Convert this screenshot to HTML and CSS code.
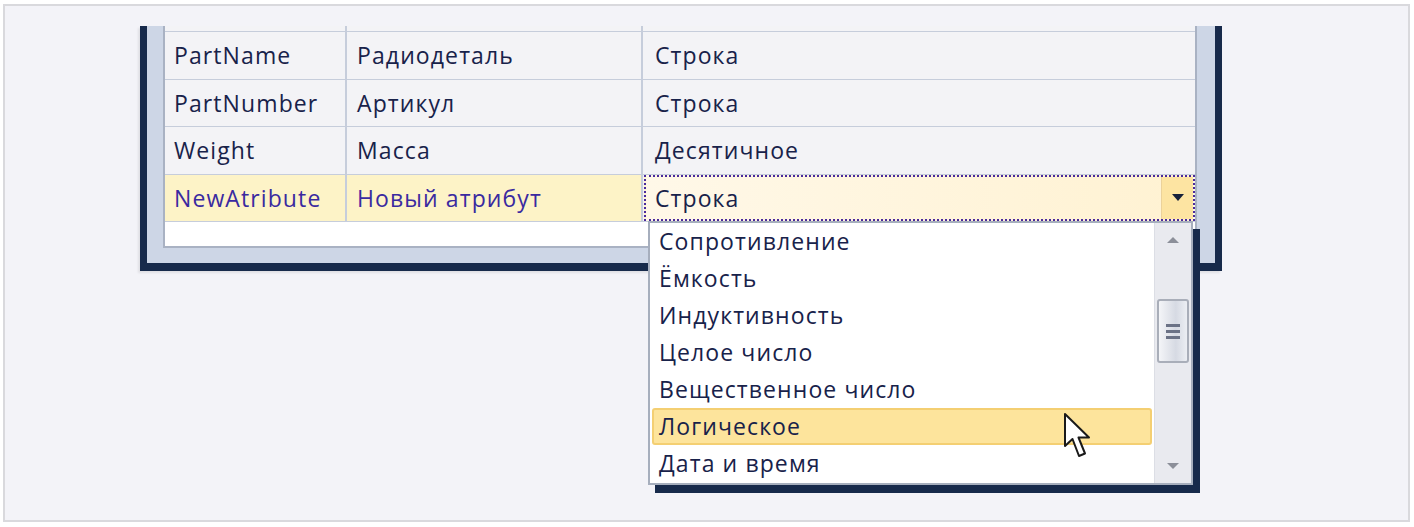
FILE: index.html
```html
<!DOCTYPE html>
<html lang="ru">
<head>
    <meta charset="UTF-8">
    <title>Атрибуты</title>
    <link rel="stylesheet" href="styles.css">
</head>
<body>
    <div class="frame">
        <div class="window">
            <div class="grid">
                <div class="row row-head">
                    <div class="cell c1"></div>
                    <div class="cell c2"></div>
                    <div class="cell c3"></div>
                </div>
                <div class="row">
                    <div class="cell c1">PartName</div>
                    <div class="cell c2">Радиодеталь</div>
                    <div class="cell c3">Строка</div>
                </div>
                <div class="row">
                    <div class="cell c1">PartNumber</div>
                    <div class="cell c2">Артикул</div>
                    <div class="cell c3">Строка</div>
                </div>
                <div class="row">
                    <div class="cell c1">Weight</div>
                    <div class="cell c2">Масса</div>
                    <div class="cell c3">Десятичное</div>
                </div>
                <div class="row selected">
                    <div class="cell c1">NewAtribute</div>
                    <div class="cell c2">Новый атрибут</div>
                    <div class="cell c3 editor">
                        <span class="editor-text">Строка</span>
                        <span class="drop-btn"><span class="tri"></span></span>
                    </div>
                </div>
                <div class="row row-empty"></div>
            </div>
        </div>

        <div class="dropdown">
            <ul class="options">
                <li>Сопротивление</li>
                <li>Ёмкость</li>
                <li>Индуктивность</li>
                <li>Целое число</li>
                <li>Вещественное число</li>
                <li class="hover">Логическое</li>
                <li>Дата и время</li>
            </ul>
            <div class="scrollbar">
                <span class="arrow up"></span>
                <span class="thumb"><i></i><i></i><i></i></span>
                <span class="arrow down"></span>
            </div>
        </div>

        <svg class="cursor" width="32" height="50" viewBox="0 0 32 50">
            <path d="M2 2 L2 34 L9.5 27 L16 44 L22 41.5 L15.5 25.5 L26 25.5 Z" fill="#ffffff" stroke="#1a1a1a" stroke-width="2" stroke-linejoin="round"/>
        </svg>
    </div>
</body>
</html>
```

FILE: styles.css
```css
* {
    margin: 0;
    padding: 0;
    box-sizing: border-box;
}

:root {
    --navy: #172a4b;
    --panel: #cdd6e6;
    --line: #c6cddb;
    --text: #18224a;
    --text-sel: #3a2aa0;
}

body {
    background: #ffffff;
    font-family: 'Open Sans', 'Liberation Sans', sans-serif;
    font-size: 23px;
    letter-spacing: 1.1px;
    color: var(--text);
}

.frame {
    position: relative;
    margin: 4px 4px 0 3px;
    height: 518px;
    border: 2px solid #d9d9dd;
    background: #f3f3f8;
    padding-top: 20px;
}

/* window */
.window {
    margin-left: 135px;
    width: 1082px;
    background: var(--panel);
    border-left: 7px solid var(--navy);
    border-right: 7px solid var(--navy);
    border-bottom: 8px solid var(--navy);
    padding: 0 18px 15px 16px;
    box-shadow: -2px 2px 2px rgba(0, 0, 0, 0.08);
}

.grid {
    background: #ffffff;
    border: 2px solid #a9b2c3;
    border-top: none;
}

.row {
    display: flex;
    height: 47.5px;
    background: #f3f3f6;
    border-bottom: 1px solid var(--line);
}

.row-head {
    height: 6px;
}

.row-empty {
    height: 24px;
    background: #ffffff;
    border-bottom: none;
}

.cell {
    display: flex;
    align-items: center;
    padding-left: 9px;
    border-right: 2px solid var(--line);
    white-space: nowrap;
}

.c1 { width: 182px; }
.c2 { width: 296px; padding-left: 10px; }
.c3 { flex: 1; border-right: none; padding-left: 12px; }

.selected .c1,
.selected .c2 {
    background: #fdf3c7;
    color: var(--text-sel);
}

.editor {
    position: relative;
    padding-left: 0;
    margin-left: 1px;
    border: 2px dotted #4a2a9c;
    background: linear-gradient(90deg, #fff8e8, #fff2d2);
    justify-content: space-between;
}

.editor-text {
    padding-left: 9px;
}

.drop-btn {
    width: 32px;
    height: 100%;
    background: #fde4a2;
    border-left: 1px solid #ecd29a;
    display: flex;
    align-items: center;
    justify-content: center;
}

.tri {
    width: 0;
    height: 0;
    border-left: 6px solid transparent;
    border-right: 6px solid transparent;
    border-top: 7px solid #16203a;
}

/* dropdown list */
.dropdown {
    position: absolute;
    left: 643px;
    top: 215px;
    width: 545px;
    height: 264px;
    background: #ffffff;
    border: 2px solid #a6aebd;
    box-shadow: 7px 8px 0 var(--navy);
    display: flex;
}

.options {
    list-style: none;
    flex: 1;
    padding: 0 2px;
}

.options li {
    height: 37px;
    line-height: 37px;
    padding-left: 7px;
    white-space: nowrap;
}

.options li.hover {
    background: #fde49c;
    border: 2px solid #f4cf72;
    border-radius: 3px;
    line-height: 33px;
    padding-left: 5px;
}

.scrollbar {
    width: 37px;
    background: #e9eaef;
    border-left: 1px solid #dcdee5;
    display: flex;
    flex-direction: column;
    align-items: center;
    padding: 14px 3px 14px;
}

.arrow {
    width: 0;
    height: 0;
    border-left: 6px solid transparent;
    border-right: 6px solid transparent;
}

.arrow.up {
    border-bottom: 6px solid #8c8f99;
    margin-bottom: 56px;
}

.arrow.down {
    border-top: 6px solid #8c8f99;
    margin-top: auto;
}

.thumb {
    width: 32px;
    height: 64px;
    border: 2px solid #a9aeb9;
    border-radius: 3px;
    background: linear-gradient(90deg, #f4f5f8, #d6dae3 60%, #eceef3);
    display: flex;
    flex-direction: column;
    align-items: center;
    justify-content: center;
    gap: 3px;
}

.thumb i {
    width: 14px;
    height: 3px;
    background: #6b7286;
}

.cursor {
    position: absolute;
    left: 1058px;
    top: 406px;
}
```
